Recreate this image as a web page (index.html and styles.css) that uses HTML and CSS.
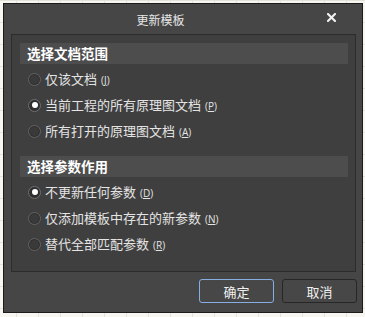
FILE: index.html
```html
<!DOCTYPE html>
<html lang="zh">
<head>
<meta charset="utf-8">
<link rel="stylesheet" href="styles.css">
</head>
<body>
<div class="dialog">
  <div class="titlebar">
    <span class="title">更新模板</span>
    <button class="close" aria-label="关闭">
      <svg width="9" height="9" viewBox="0 0 9 9"><path d="M1 1L8 8M8 1L1 8" stroke="#f2f2f2" stroke-width="2.1" stroke-linecap="square"/></svg>
    </button>
  </div>
  <div class="panel">
    <div class="section">
      <div class="section-head">选择文档范围</div>
      <label class="opt"><span class="radio"></span><span class="lbl">仅该文档</span><span class="mn">(<u>J</u>)</span></label>
      <label class="opt"><span class="radio on"></span><span class="lbl">当前工程的所有原理图文档</span><span class="mn">(<u>P</u>)</span></label>
      <label class="opt"><span class="radio"></span><span class="lbl">所有打开的原理图文档</span><span class="mn">(<u>A</u>)</span></label>
    </div>
    <div class="section">
      <div class="section-head">选择参数作用</div>
      <label class="opt"><span class="radio on"></span><span class="lbl">不更新任何参数</span><span class="mn">(<u>D</u>)</span></label>
      <label class="opt"><span class="radio"></span><span class="lbl">仅添加模板中存在的新参数</span><span class="mn">(<u>N</u>)</span></label>
      <label class="opt"><span class="radio"></span><span class="lbl">替代全部匹配参数</span><span class="mn">(<u>R</u>)</span></label>
    </div>
  </div>
  <div class="buttons">
    <button class="btn primary">确定</button>
    <button class="btn">取消</button>
  </div>
</div>
</body>
</html>
```

FILE: styles.css
```css
html, body {
  margin: 0;
  padding: 0;
}
body {
  width: 365px;
  height: 317px;
  overflow: hidden;
  background-color: #f7f6f1;
  background-image:
    linear-gradient(to right, #e4e2da 1px, transparent 1px),
    linear-gradient(to bottom, #e4e2da 1px, transparent 1px);
  background-size: 22px 22px;
  background-position: 16px 0;
  font-family: "Noto Sans CJK SC", "Noto Sans", sans-serif;
}
.dialog {
  box-sizing: border-box;
  margin: 3px 0 0 3px;
  width: 360px;
  height: 310px;
  background: #464646;
  border: 1px solid #1b1b1b;
  display: flex;
  flex-direction: column;
  padding: 0 6px 0 7px;
}
.titlebar {
  position: relative;
  height: 30px;
  display: flex;
  align-items: center;
  justify-content: center;
  padding-right: 44px;
  padding-left: 0;
}
.title {
  color: #e6e6e6;
  font-size: 12px;
  line-height: 14px;
  margin-top: 1px;
  margin-left: -2px;
}
.close {
  position: absolute;
  right: 18px;
  top: 7px;
  width: 13px;
  height: 13px;
  padding: 0;
  border: 0;
  background: transparent;
  display: flex;
  align-items: center;
  justify-content: center;
}
.panel {
  box-sizing: border-box;
  height: 238px;
  border: 1px solid #2c2c2c;
  background: #3f3f3f;
  padding: 8px 7px 0 8px;
  display: flex;
  flex-direction: column;
  gap: 12px;
}
.section {
  display: flex;
  flex-direction: column;
}
.section-head {
  height: 21px;
  background: #4d4d4d;
  color: #ffffff;
  font-size: 13.5px;
  font-weight: bold;
  line-height: 21px;
  padding-left: 7px;
  margin-bottom: 2px;
}
.opt {
  height: 26px;
  display: flex;
  align-items: center;
  padding-left: 8px;
  color: #e4e4e4;
  font-size: 13px;
}
.radio {
  box-sizing: border-box;
  width: 13px;
  height: 13px;
  border-radius: 50%;
  background: #3a3a3a;
  border: 1px solid #626262;
  box-shadow: inset 0 0 0 1px #303030;
  margin-right: 4px;
  flex: none;
  display: flex;
  align-items: center;
  justify-content: center;
}
.radio.on {
  background: #2e2e2e;
  border-color: #707070;
}
.radio.on::after {
  content: "";
  width: 6px;
  height: 6px;
  border-radius: 50%;
  background: #ffffff;
}
.lbl {
  line-height: 16px;
}
.mn {
  font-family: "Open Sans", "Noto Sans", sans-serif;
  font-size: 10px;
  margin-left: 4px;
  line-height: 14px;
  margin-top: 2px;
}
.mn u {
  text-decoration-thickness: 1px;
  text-underline-offset: 1px;
}
.buttons {
  display: flex;
  justify-content: flex-end;
  gap: 8px;
  margin-top: 7px;
  padding-right: 0;
  margin-right: -1px;
}
.btn {
  box-sizing: border-box;
  width: 75px;
  height: 24px;
  border-radius: 3px;
  border: 1px solid #262626;
  background: #474747;
  color: #f0f0f0;
  font-family: "Noto Sans CJK SC", sans-serif;
  font-size: 13px;
  padding: 0;
}
.btn.primary {
  border-color: #86aee0;
}
```
